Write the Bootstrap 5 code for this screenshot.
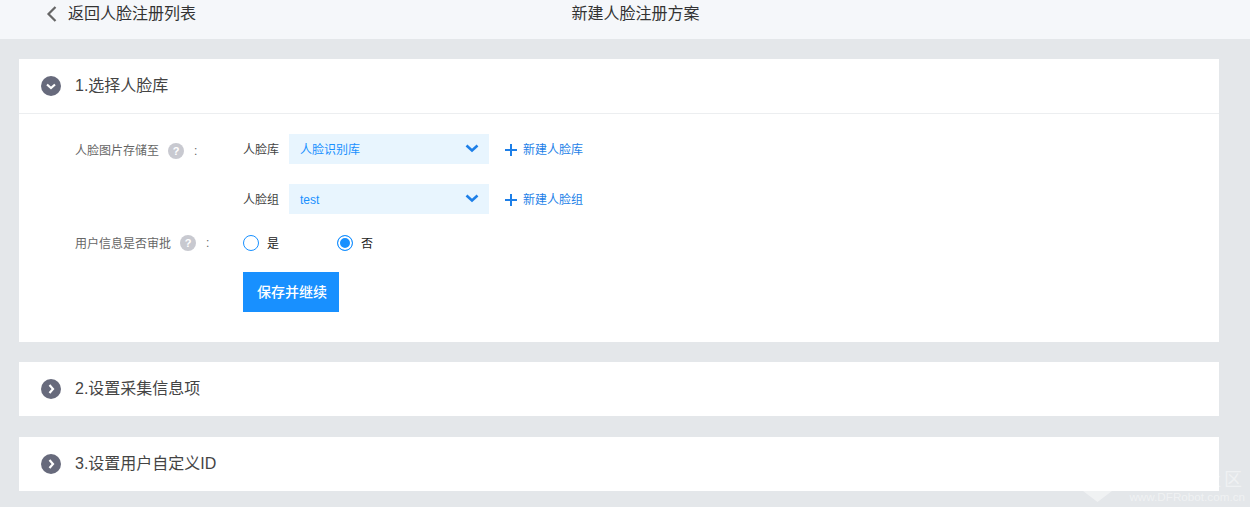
<!DOCTYPE html>
<html lang="zh-CN">
<head>
<meta charset="utf-8">
<title>新建人脸注册方案</title>
<link href="https://cdn.jsdelivr.net/npm/bootstrap@5.3.0/dist/css/bootstrap.min.css" rel="stylesheet">
<style>
html,body{height:507px;overflow:hidden}
body{background:#e4e7ea;font-family:"Liberation Sans","Noto Sans CJK SC",sans-serif;color:#333;position:relative}
.topbar{height:39px;background:#f5f7fa;padding-left:46px;font-size:16px;line-height:28px;position:relative}
.topbar-back{display:flex;align-items:center;gap:11px;width:400px;color:#333}
.topbar-title{position:absolute;left:0;right:0;top:0;text-align:center;padding-left:21px}
.panes{padding:20px 31px 0 19px;display:flex;flex-direction:column}
.pane{background:#fff;margin-bottom:20px}
.pane:nth-child(2){margin-bottom:21px}
.pane-head{height:54px;display:flex;align-items:center;padding-left:22px;gap:14px;font-size:16px;color:#444}
.pane-open .pane-head{border-bottom:1px solid #eceef0;height:55px}
.pane-open{height:283px}
.disc{width:20px;height:20px;display:block;flex:none}
.pane-body{padding-top:20px;font-size:12px}
.line{display:flex;align-items:center;height:30px;margin-bottom:20px}
.line-radio{margin-bottom:19px;height:20px;margin-top:-1px}
.line-btn{height:40px;margin:0;padding-left:224px}
.lab{width:224px;padding-left:56px;display:flex;align-items:center;color:#666;flex:none}
.lab-spaced{padding-top:4px}
.nudge{padding-top:2px}
.tip{width:16px;height:16px;border-radius:50%;background:#c8c9d0;color:#fff;font-size:11px;font-weight:700;line-height:16px;text-align:center;margin:0 10px 0 9px;flex:none}
.fld{width:46px;flex:none;color:#444;padding-top:2px}
.fake-select{width:200px;height:30px;background:#e8f5fe;color:#1890ff;display:flex;align-items:center;justify-content:space-between;padding:0 10px 0 11px;flex:none}
.fake-select svg{width:14px;height:9px;display:block;margin-top:-2px}
.add-link{margin-left:16px;display:flex;align-items:center;gap:6px;color:#1d7fe8;text-decoration:none}
.add-link svg{width:12px;height:12px;display:block}
.rad{display:flex;align-items:center;gap:8px;color:#222;width:94px}
.dot{width:16px;height:16px;border-radius:50%;border:1px solid #1890ff;background:#fff;flex:none;display:block}
.dot-on{box-shadow:inset 0 0 0 2px #fff;background:#1890ff}
.save-btn{width:96px;height:40px;background:#1890ff;border:0;border-radius:0;color:#fff;font-size:14px;font-weight:500;padding:0 0 0 2px}
.save-btn:hover{background:#1890ff;color:#fff}
.wm{position:absolute;right:5px;bottom:4px;color:rgba(255,255,255,.45);font-size:11.7px;line-height:12px;pointer-events:none}
.wm-zone{position:absolute;right:5px;bottom:17px;color:rgba(255,255,255,.45);font-size:18px;line-height:20px;letter-spacing:3px;pointer-events:none}
.wm-mark{position:absolute;left:1083px;bottom:5px;width:29px;height:11px;pointer-events:none}
</style>
</head>
<body>
<div class="topbar">
  <div class="topbar-back">
    <svg width="11" height="16" viewBox="0 0 11 16" aria-hidden="true"><path d="M9.5 1 2.5 8l7 7" fill="none" stroke="#666" stroke-width="2.2"/></svg>
    <span>返回人脸注册列表</span>
  </div>
  <div class="topbar-title">新建人脸注册方案</div>
</div>
<div class="panes">
  <section class="pane pane-open">
    <div class="pane-head">
      <svg class="disc" viewBox="0 0 20 20" aria-hidden="true"><circle cx="10" cy="10" r="10" fill="#676a7c"/><path d="M6 8.5l4 3.5 4-3.5" fill="none" stroke="#fff" stroke-width="2.2"/></svg>
      <span>1.选择人脸库</span>
    </div>
    <div class="pane-body">
      <div class="line">
        <div class="lab lab-spaced"><span>人脸图片存储至</span><span class="tip">?</span><span>:</span></div>
        <span class="fld">人脸库</span>
        <div class="fake-select"><span class="nudge">人脸识别库</span><svg viewBox="0 0 14 9" aria-hidden="true"><path d="M1.5 1.5 7 6.5l5.5-5" fill="none" stroke="#1d7fe8" stroke-width="2.6"/></svg></div>
        <a class="add-link nudge" href="#"><svg viewBox="0 0 12 12" aria-hidden="true"><path d="M6 0v12M0 6h12" stroke="#1d7fe8" stroke-width="2"/></svg>新建人脸库</a>
      </div>
      <div class="line">
        <div class="lab"></div>
        <span class="fld">人脸组</span>
        <div class="fake-select"><span class="nudge">test</span><svg viewBox="0 0 14 9" aria-hidden="true"><path d="M1.5 1.5 7 6.5l5.5-5" fill="none" stroke="#1d7fe8" stroke-width="2.6"/></svg></div>
        <a class="add-link nudge" href="#"><svg viewBox="0 0 12 12" aria-hidden="true"><path d="M6 0v12M0 6h12" stroke="#1d7fe8" stroke-width="2"/></svg>新建人脸组</a>
      </div>
      <div class="line line-radio">
        <div class="lab"><span class="nudge">用户信息是否审批</span><span class="tip">?</span><span>:</span></div>
        <label class="rad"><span class="dot"></span><span class="nudge">是</span></label>
        <label class="rad"><span class="dot dot-on"></span><span class="nudge">否</span></label>
      </div>
      <div class="line line-btn"><button class="btn save-btn" type="button">保存并继续</button></div>
    </div>
  </section>
  <section class="pane">
    <div class="pane-head">
      <svg class="disc" viewBox="0 0 20 20" aria-hidden="true"><circle cx="10" cy="10" r="10" fill="#676a7c"/><path d="M8.5 6l3.5 4-3.5 4" fill="none" stroke="#fff" stroke-width="2.2"/></svg>
      <span>2.设置采集信息项</span>
    </div>
  </section>
  <section class="pane">
    <div class="pane-head">
      <svg class="disc" viewBox="0 0 20 20" aria-hidden="true"><circle cx="10" cy="10" r="10" fill="#676a7c"/><path d="M8.5 6l3.5 4-3.5 4" fill="none" stroke="#fff" stroke-width="2.2"/></svg>
      <span>3.设置用户自定义ID</span>
    </div>
  </section>
</div>
<svg class="wm-mark" viewBox="0 0 29 11" aria-hidden="true"><path d="M0 0h29L14.5 11z" fill="#fff" fill-opacity=".45"/></svg>
<div class="wm-zone">社区</div>
<div class="wm">www.DFRobot.com.cn</div>
<script src="https://cdn.jsdelivr.net/npm/bootstrap@5.3.0/dist/js/bootstrap.bundle.min.js"></script>
</body>
</html>
